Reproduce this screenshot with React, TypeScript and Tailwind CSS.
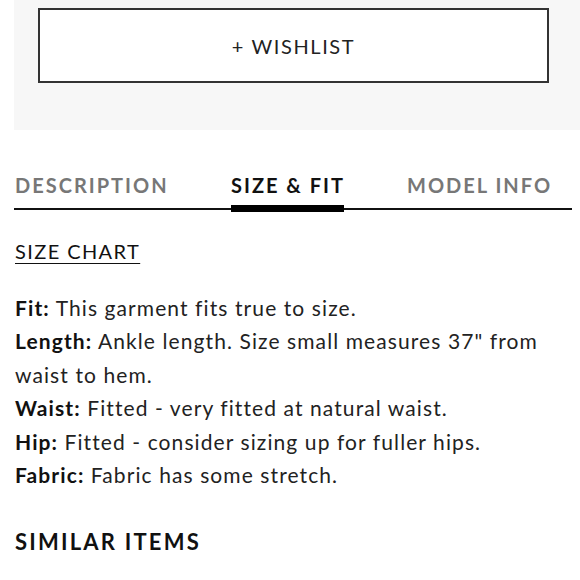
import React from "react";

export default function App() {
  const font = { fontFamily: "Lato, 'Open Sans', sans-serif" };
  const rows: [string, string][] = [
    ["Fit:", "This garment fits true to size."],
    ["Length:", 'Ankle length. Size small measures 37" from waist to hem.'],
    ["Waist:", "Fitted - very fitted at natural waist."],
    ["Hip:", "Fitted - consider sizing up for fuller hips."],
    ["Fabric:", "Fabric has some stretch."],
  ];
  return (
    <div className="w-[580px] h-[580px] bg-white overflow-hidden text-[#111]" style={font}>
      <div className="ml-[14px] h-[130px] bg-[#f7f7f7] pt-[8px] pl-[24px] pr-[31px]">
        <div className="h-[75px] border-2 border-[#333] bg-white flex items-center justify-center text-[20px] tracking-[0.08em] text-[#222]">
          + WISHLIST
        </div>
      </div>
      <div className="mx-[14px] mr-[8px] mt-[43px] relative border-b-2 border-[#111] flex h-[37px] items-start text-[20px] font-bold tracking-[0.1em]">
        <div className="w-[217px] pl-[1px] text-[#777] leading-[24px]">DESCRIPTION</div>
        <div className="relative w-[176px] text-[#111] leading-[24px]">
          SIZE &amp; FIT
          <div className="absolute left-0 top-[32px] w-[113px] h-[7px] bg-black" />
        </div>
        <div className="text-[#777] leading-[24px]">MODEL INFO</div>
      </div>
      <div className="px-[15px] pt-[29px] pr-[28px]">
        <div className="text-[20px] underline underline-offset-[4px] decoration-1 tracking-[0.07em] leading-[24px]">SIZE CHART</div>
        <div className="mt-[28px] text-[21px] leading-[33.4px] tracking-[0.052em] text-[#222]">
          {rows.map(([k, v]) => (
            <div key={k}>
              <span className="font-bold text-[#111]">{k}</span> {v}
            </div>
          ))}
        </div>
        <div className="mt-[38px] text-[22px] font-bold tracking-[0.1em] leading-[26px]">SIMILAR ITEMS</div>
      </div>
    </div>
  );
}
